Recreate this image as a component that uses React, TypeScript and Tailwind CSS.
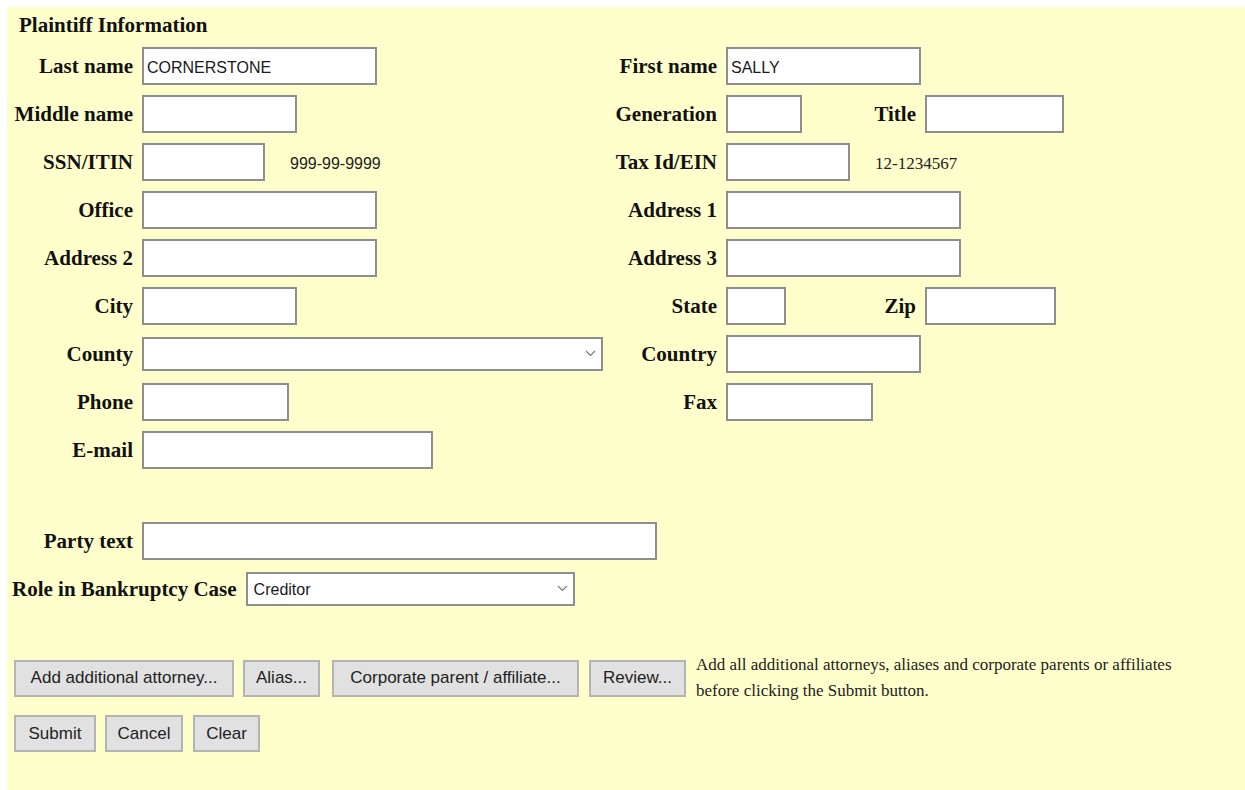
import React from 'react';

const serif = "font-['Liberation_Serif','Times_New_Roman',serif]";
const sans = "font-['Liberation_Sans',Arial,sans-serif]";

function Label({ children, className = 'w-[126px]' }: { children: React.ReactNode; className?: string }) {
  return (
    <label className={`${serif} shrink-0 text-right text-[21px] font-bold leading-[24px] text-[#111] ${className}`}>
      {children}
    </label>
  );
}

function TextInput({ className, value }: { className: string; value?: string }) {
  return (
    <input
      type="text"
      defaultValue={value}
      className={`${sans} h-[38px] shrink-0 border-2 border-[#8e8e8e] bg-white px-[3px] pt-[3px] text-[16px] text-[#1a1a1a] outline-none ${className}`}
    />
  );
}

function Select({ className, value }: { className: string; value?: string }) {
  return (
    <div className={`relative h-[34px] shrink-0 ${className}`}>
      <select
        defaultValue={value ?? ''}
        className={`${sans} h-full w-full appearance-none border-2 border-[#8e8e8e] bg-white pl-[6px] pt-[2px] text-[16px] text-[#1a1a1a] outline-none`}
      >
        <option value=""></option>
        {value && <option value={value}>{value}</option>}
      </select>
      <svg
        className="pointer-events-none absolute right-[7px] top-[13px]"
        width="11"
        height="7"
        viewBox="0 0 11 7"
        fill="none"
      >
        <path d="M1 1l4.5 4.5L10 1" stroke="#7a7a7a" strokeWidth="1.2" />
      </svg>
    </div>
  );
}

function Button({ children, className }: { children: React.ReactNode; className: string }) {
  return (
    <button
      type="button"
      className={`${sans} h-[37px] shrink-0 border-2 border-[#b4b4b4] bg-[#e1e1e1] px-0 text-[17px] text-[#222] ${className}`}
    >
      {children}
    </button>
  );
}

// one line of the two-column party grid
function Row({
  label,
  left,
  rightLabel,
  right,
}: {
  label: string;
  left: React.ReactNode;
  rightLabel?: string;
  right?: React.ReactNode;
}) {
  return (
    <div className="flex h-[48px] items-center">
      <Label>{label}</Label>
      <div className="ml-[9px] flex w-[465px] shrink-0 items-center">{left}</div>
      {rightLabel && <Label className="w-[110px]">{rightLabel}</Label>}
      {right && <div className="ml-[9px] flex items-center">{right}</div>}
    </div>
  );
}

function Hint({ children }: { children: React.ReactNode }) {
  return <span className="ml-[25px] pt-[3px] text-[#222]">{children}</span>;
}

export default function App() {
  return (
    <div className="min-h-[790px] bg-white pl-[7px] pt-[7px]">
      <div className="min-h-[783px] bg-[#ffffcc] pt-[6px]">
        <h2 className={`${serif} pl-[12px] text-[21px] font-bold leading-[24px] text-[#111]`}>
          Plaintiff Information
        </h2>

        <div className="mt-[5px]">
          <Row
            label="Last name"
            left={<TextInput className="w-[235px]" value="CORNERSTONE" />}
            rightLabel="First name"
            right={<TextInput className="w-[195px]" value="SALLY" />}
          />
          <Row
            label="Middle name"
            left={<TextInput className="w-[155px]" />}
            rightLabel="Generation"
            right={
              <>
                <div className="w-[130px] shrink-0">
                  <TextInput className="w-[76px]" />
                </div>
                <Label className="w-[60px]">Title</Label>
                <TextInput className="ml-[9px] w-[139px]" />
              </>
            }
          />
          <Row
            label="SSN/ITIN"
            left={
              <>
                <TextInput className="w-[123px]" />
                <Hint>
                  <span className={`${sans} text-[16px]`}>999-99-9999</span>
                </Hint>
              </>
            }
            rightLabel="Tax Id/EIN"
            right={
              <>
                <TextInput className="w-[124px]" />
                <Hint>
                  <span className={`${serif} text-[17px]`}>12-1234567</span>
                </Hint>
              </>
            }
          />
          <Row
            label="Office"
            left={<TextInput className="w-[235px]" />}
            rightLabel="Address 1"
            right={<TextInput className="w-[235px]" />}
          />
          <Row
            label="Address 2"
            left={<TextInput className="w-[235px]" />}
            rightLabel="Address 3"
            right={<TextInput className="w-[235px]" />}
          />
          <Row
            label="City"
            left={<TextInput className="w-[155px]" />}
            rightLabel="State"
            right={
              <>
                <div className="w-[130px] shrink-0">
                  <TextInput className="w-[60px]" />
                </div>
                <Label className="w-[60px]">Zip</Label>
                <TextInput className="ml-[9px] w-[131px]" />
              </>
            }
          />
          <Row
            label="County"
            left={<Select className="w-[461px]" />}
            rightLabel="Country"
            right={<TextInput className="w-[195px]" />}
          />
          <Row
            label="Phone"
            left={<TextInput className="w-[147px]" />}
            rightLabel="Fax"
            right={<TextInput className="w-[147px]" />}
          />
          <Row label="E-mail" left={<TextInput className="w-[291px]" />} />
        </div>

        <div className="mt-[43px] flex h-[48px] items-center">
          <Label>Party text</Label>
          <TextInput className="ml-[9px] w-[515px]" />
        </div>
        <div className="flex h-[48px] items-center pl-[5px]">
          <Label className="">Role in Bankruptcy Case</Label>
          <Select className="ml-[9px] w-[329px]" value="Creditor" />
        </div>

        <div className="mt-[39px] flex items-center pl-[7px]">
          <Button className="w-[220px]">Add additional attorney...</Button>
          <Button className="ml-[9px] w-[77px]">Alias...</Button>
          <Button className="ml-[12px] w-[247px]">Corporate parent / affiliate...</Button>
          <Button className="ml-[10px] w-[97px]">Review...</Button>
          <p className={`${serif} ml-[10px] text-[17px] leading-[26px] text-[#222]`}>
            Add all additional attorneys, aliases and corporate parents or affiliates
            <br />
            before clicking the Submit button.
          </p>
        </div>
        <div className="mt-[11px] flex items-center pl-[7px]">
          <Button className="w-[82px]">Submit</Button>
          <Button className="ml-[9px] w-[78px]">Cancel</Button>
          <Button className="ml-[10px] w-[67px]">Clear</Button>
        </div>
      </div>
    </div>
  );
}
